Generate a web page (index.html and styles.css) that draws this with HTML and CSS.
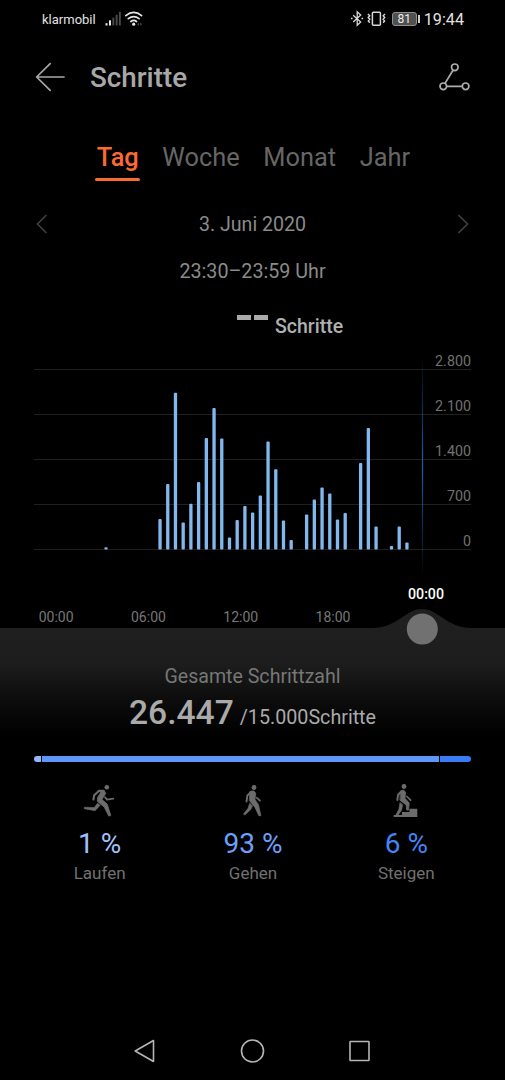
FILE: index.html
```html
<!DOCTYPE html>
<html lang="de">
<head>
  <meta charset="UTF-8" />
  <meta name="viewport" content="width=device-width, initial-scale=1.0"/>
  <title>Schritte</title>
  <link rel="stylesheet" href="styles.css">
</head>
<body>
  <div class="status-bar">
    <span class="carrier">klarmobil</span>
    <svg class="signal" width="40" height="18" viewBox="0 0 40 18">
      <g fill="#e6e6e6">
        <rect x="1.5" y="13.2" width="2" height="2.3"/>
        <rect x="5" y="10.3" width="2" height="5.2"/>
      </g>
      <g fill="#4a4a4a">
        <rect x="8.4" y="7.6" width="1.9" height="7.9"/>
        <rect x="11.7" y="4.8" width="1.9" height="10.7"/>
        <rect x="14.9" y="1.8" width="1.9" height="13.7"/>
        <path d="M35 12.5l-1.8 1.7 1.8 1.7zM36.2 12.5l1.8 1.7-1.8 1.7z"/>
      </g>
      <g fill="none" stroke="#e6e6e6" stroke-width="1.7" stroke-linecap="round">
        <path d="M21.8 5.6q7.9-6.4 15.8 0"/>
        <path d="M24.3 8.7q5.4-4.2 10.8 0"/>
        <path d="M26.9 11.5q2.8-2.2 5.6 0"/>
      </g>
      <circle cx="29.7" cy="14.2" r="1.6" fill="#e6e6e6"/>
    </svg>
    <div class="status-right">
      <svg width="36" height="18" viewBox="0 0 36 18" fill="none" stroke="#d8d8d8">
        <path d="M2.2 5.2l7.5 6.8-3.5 3.3V1.7l3.5 3.3-7.5 7" stroke-width="1.3"/>
        <path d="M0 8.5h1.6M10.5 8.5h1.6" stroke-width="1.7"/>
        <rect x="21.4" y="2.2" width="8" height="13" rx="1" stroke-width="1.5"/>
        <path d="M16.9 4l1.8 1.8-1.5 1.7 1.6 1.7-1.5 1.7 1.5 1.8M34 4l-1.8 1.8 1.5 1.7-1.6 1.7 1.5 1.7-1.5 1.8" stroke-width="1.4"/>
      </svg>
      <span class="battery">81</span>
      <span class="clock">19:44</span>
    </div>
  </div>

  <div class="header">
    <svg width="30" height="30" viewBox="0 0 30 30" fill="none" stroke="#a8a8a8" stroke-width="1.7" stroke-linecap="round" stroke-linejoin="round">
      <path d="M29 15H2M15.2 1.6L1.6 15l13.6 13.4"/>
    </svg>
    <h1>Schritte</h1>
    <svg class="share" width="34" height="30" viewBox="0 0 34 30" fill="none" stroke="#adadad" stroke-width="1.7">
      <circle cx="17.8" cy="5.3" r="3.3"/>
      <circle cx="6.3" cy="24.3" r="3.3"/>
      <circle cx="28.6" cy="24.3" r="3.3"/>
      <path d="M16 8.2L8 21.4M9.6 24.3h15.7"/>
    </svg>
  </div>

  <div class="tabs">
    <span class="tab active">Tag</span>
    <span class="tab">Woche</span>
    <span class="tab">Monat</span>
    <span class="tab">Jahr</span>
  </div>

  <div class="date-row">
    <svg width="12" height="20" viewBox="0 0 12 20"><path d="M10.5 1L1.5 10l9 9"/></svg>
    <span>3. Juni 2020</span>
    <svg width="12" height="20" viewBox="0 0 12 20"><path d="M1.5 1l9 9-9 9"/></svg>
  </div>
  <div class="time-range">23:30–23:59 Uhr</div>
  <div class="current">
    <span class="dash"></span><span class="dash"></span>
    <span class="unit">Schritte</span>
  </div>

  <div class="chart">
    <div class="line">2.800</div>
    <div class="line">2.100</div>
    <div class="line">1.400</div>
    <div class="line">700</div>
    <div class="line">0</div>
    <svg class="bars" id="bars" width="438" height="230" viewBox="0 0 438 230">
      <defs>
        <linearGradient id="cursor" x1="0" y1="0" x2="0" y2="1">
          <stop offset="0" stop-color="#1c5fae" stop-opacity="0"/>
          <stop offset=".5" stop-color="#1c5fae"/>
          <stop offset="1" stop-color="#1c5fae" stop-opacity="0"/>
        </linearGradient>
      </defs>
      <rect x="387.9" y="5" width="1.2" height="223" fill="url(#cursor)"/>
    </svg>
  </div>

  <div class="selected-time">00:00</div>
  <div class="hours">
    <span>00:00</span>
    <span>06:00</span>
    <span>12:00</span>
    <span>18:00</span>
  </div>

  <div class="summary">
    <svg class="slider" width="100" height="38" viewBox="0 0 100 38">
      <path d="M0 20C26 20 33 1 50 1s24 19 50 19z" fill="#1f1f1f"/>
      <circle cx="50.3" cy="21" r="15.5" fill="#717171"/>
    </svg>
    <div class="total-label">Gesamte Schrittzahl</div>
    <div class="total"><b>26.447</b><span>/15.000Schritte</span></div>
    <div class="split">
      <div class="run"></div>
      <div class="walk"></div>
      <div class="climb"></div>
    </div>
  </div>

  <div class="activities">
    <div class="activity">
      <svg width="34" height="36" viewBox="0 0 34 36" fill="none" stroke="#6c6c6c" stroke-linecap="round" stroke-linejoin="round">
        <circle cx="23.8" cy="4.3" r="2.3" fill="#6c6c6c" stroke="none"/>
        <path d="M20.5 7.7L16 7.7 11.2 12.3l-.8 4.2" stroke-width="2.1"/>
        <path d="M16 7.5l5.4.3 1.3 2.6-3.7 6.1 5.2 4.6 3.6 11.5-2.1.4-4.5-9-6.9-5.7.4-4.1 3-4.8z" fill="#6c6c6c" stroke-width=".8"/>
        <path d="M22.1 14.3l2 2.3 6.1-.9" stroke-width="1.8"/>
        <path d="M14.6 20.3l-3.3 4.2-10-.3v1.6l10.8 1.9 4.9-5.3z" fill="#6c6c6c" stroke-width=".6"/>
      </svg>
      <div class="percent light">1 %</div>
      <div class="name">Laufen</div>
    </div>
    <div class="activity">
      <svg width="34" height="36" viewBox="0 0 34 36" fill="none" stroke="#6c6c6c" stroke-linecap="round" stroke-linejoin="round">
        <circle cx="18" cy="4.5" r="2.4" fill="#6c6c6c" stroke="none"/>
        <path d="M15 8.8l-3.6 3.7-.9 6" stroke-width="1.9"/>
        <path d="M14.2 8.5l3.3-.7 2.2 2.2-.7 6.5 3.5 5.5 2.3 10.5-1.8.4-4.3-9-5.2-6.1z" fill="#6c6c6c" stroke-width=".8"/>
        <path d="M20.9 14.8l3 2.8" stroke-width="1.8"/>
        <path d="M13.6 20.5l-1.5 4.7-4.5 5.8 1.1 1.1 6-5.5 1.7-3.5z" fill="#6c6c6c" stroke-width=".7"/>
      </svg>
      <div class="percent medium">93 %</div>
      <div class="name">Gehen</div>
    </div>
    <div class="activity">
      <svg width="34" height="36" viewBox="0 0 34 36" fill="none" stroke="#6c6c6c" stroke-linecap="round" stroke-linejoin="round">
        <circle cx="15" cy="3.5" r="2.4" fill="#6c6c6c" stroke="none"/>
        <path d="M12.4 8.4L9 12l-.7 5" stroke-width="1.9"/>
        <path d="M11.7 8l2.7-1 2.2 2-.6 6.2 4.2 4.9-.7 7h-1.8l-.5-5.1-6-4.6z" fill="#6c6c6c" stroke-width=".8"/>
        <path d="M17.9 13.5l3.7 3.7" stroke-width="1.7"/>
        <path d="M10.9 19.8l-1 6.5-3.3 6.1h2.2l3.8-5.2 1-5.3z" fill="#6c6c6c" stroke-width=".6"/>
        <path d="M4.7 33.9v-1.9h8.2v-3h7.5v-3.2h7.9v8.1z" fill="#6c6c6c" stroke="none"/>
      </svg>
      <div class="percent dark">6 %</div>
      <div class="name">Steigen</div>
    </div>
  </div>

  <div class="nav-bar">
    <svg width="24" height="26" viewBox="0 0 24 26"><path d="M20.5 2.5v21L2.2 13z"/></svg>
    <svg width="26" height="26" viewBox="0 0 26 26"><circle cx="12.5" cy="13" r="11"/></svg>
    <svg width="24" height="26" viewBox="0 0 24 26"><rect x="2" y="3.5" width="19" height="19" rx=".5"/></svg>
  </div>

  <script>
    // steps per half hour, starting at 00:00
    const steps = [
      0, 0, 0, 0, 0, 0, 35, 0, 0, 0, 0, 0,
      0, 475, 1020, 2440, 420, 710, 1050, 1735, 2200, 1725, 187, 460,
      675, 575, 840, 1680, 1250, 450, 148, 0, 545, 778, 965, 870,
      466, 568, 0, 1345, 1890, 358, 0, 55, 358, 110, 0, 0
    ];
    const bars = document.getElementById('bars');
    const step = 7.715;
    const base = 199.5;

    steps.forEach((value, index) => {
      if (!value) return;
      const height = value / 2800 * 180;
      const bar = document.createElementNS('http://www.w3.org/2000/svg', 'rect');
      bar.setAttribute('x', 24.1 + index * step);
      bar.setAttribute('y', base - height);
      bar.setAttribute('width', 3.3);
      bar.setAttribute('height', height);
      bar.setAttribute('rx', Math.min(1, height / 2));
      bars.appendChild(bar);
    });
  </script>
</body>
</html>
```
FILE: styles.css
```css
* {
  box-sizing: border-box;
}
body {
  margin: 0;
  width: 505px;
  height: 1080px;
  background: #000;
  color: #8a8a8a;
  font-family: Roboto, sans-serif;
  display: flex;
  flex-direction: column;
  overflow: hidden;
}
svg {
  display: block;
  flex: none;
}
.status-bar {
  height: 38px;
  padding: 0 41px 0 42px;
  display: flex;
  align-items: center;
  color: #e2e2e2;
}
.carrier {
  font-size: 13px;
  width: 62px;
}
.status-right {
  margin-left: auto;
  display: flex;
  align-items: center;
}
.battery {
  position: relative;
  width: 25px;
  height: 14px;
  margin-left: 5px;
  border: 1px solid #909090;
  border-radius: 3px;
  background: #505050;
  color: #eee;
  font-size: 12px;
  line-height: 12px;
  text-align: center;
}
.battery::after {
  content: "";
  position: absolute;
  right: -4px;
  top: 2px;
  width: 2px;
  height: 8px;
  background: #ccc;
}
.clock {
  margin-left: 7px;
  font-size: 16.2px;
}
.header {
  height: 78px;
  padding: 0 34px 0 35px;
  display: flex;
  align-items: center;
}
h1 {
  margin: 0 0 0 25px;
  font-size: 27.8px;
  font-weight: 500;
  color: #a8a8a8;
}
.share {
  margin-left: auto;
}
.tabs {
  height: 66px;
  padding: 24px 0 0 2px;
  display: flex;
  justify-content: center;
  gap: 23.6px;
  font-size: 25.4px;
  line-height: 34px;
  color: #666;
}
.tab {
  height: 42px;
}
.tab.active {
  position: relative;
  color: #fc6a32;
  font-weight: 500;
}
.tab.active::after {
  content: "";
  position: absolute;
  left: -2px;
  right: -1px;
  bottom: 1px;
  height: 3px;
  border-radius: 2px;
  background: #fc6a32;
}
.date-row {
  height: 83px;
  padding: 0 36px;
  display: flex;
  align-items: center;
  justify-content: space-between;
  font-size: 19.6px;
}
.date-row span {
  padding-top: 1px;
}
.date-row path {
  fill: none;
  stroke: #404040;
  stroke-width: 1.6;
}
.time-range {
  height: 12px;
  line-height: 14px;
  font-size: 19.7px;
  text-align: center;
}
.current {
  height: 73px;
  padding: 38px 0 0 237px;
  display: flex;
  gap: 3px;
}
.dash {
  width: 14px;
  height: 5px;
  background: #aaa;
}
.unit {
  margin-left: 4px;
  line-height: 24px;
  font-size: 19.5px;
  font-weight: 500;
  color: #b0b0b0;
}
.chart {
  position: relative;
  margin: -25px 34px 0;
  height: 225px;
}
.line {
  height: 45px;
  padding-top: 28px;
  border-bottom: 1px solid #202020;
  font-size: 14.3px;
  line-height: 17px;
  text-align: right;
  color: #717171;
}
.bars {
  position: absolute;
  left: 0;
  top: 25px;
}
.bars > rect:not(:first-of-type) {
  fill: #81b9ef;
}
.selected-time {
  height: 58px;
  padding: 35px 0 0 408px;
  font-size: 14.2px;
  font-weight: 500;
  line-height: 18px;
  color: #fff;
}
.hours {
  height: 20px;
  padding-left: 10px;
  display: flex;
  font-size: 14px;
  line-height: 18px;
  color: #777;
}
.hours span {
  width: 92.3px;
  text-align: center;
}
.summary {
  position: relative;
  height: 142px;
  padding: 38px 34px 0;
  background: linear-gradient(#1f1f1f 0, #1d1d1d 35px, #0d0d0d 70px, #000 108px);
  text-align: center;
}
.slider {
  position: absolute;
  left: 372px;
  top: -20px;
}
.total-label {
  font-size: 19.6px;
  line-height: 22px;
  color: #777;
}
.total {
  height: 54px;
  padding-top: 5px;
  font-size: 19.7px;
  line-height: 40px;
  color: #aaa;
}
.total b {
  margin-right: 6px;
  font-size: 33.6px;
  font-weight: 500;
}
.split {
  margin-top: 14px;
  height: 6px;
  display: flex;
  gap: 1px;
  border-radius: 3px;
  overflow: hidden;
}
.run {
  width: 7px;
  background: #90b8fb;
}
.walk {
  flex: 1;
  background: #5f97f8;
}
.climb {
  width: 31px;
  background: #397cf6;
}
.activities {
  padding: 13px 22px 0 23px;
  height: 252px;
  display: flex;
}
.activity {
  flex: 1;
  display: flex;
  flex-direction: column;
  align-items: center;
}
.percent {
  margin-top: 8px;
  font-size: 28px;
  line-height: 34px;
}
.light {
  color: #a0c2fc;
}
.medium {
  color: #6da0fa;
}
.dark {
  color: #4485f8;
}
.name {
  margin-top: 2px;
  font-size: 17px;
  line-height: 20px;
  color: #717171;
}
.nav-bar {
  padding: 16px 133px 0;
  display: flex;
  justify-content: space-between;
}
.nav-bar svg * {
  fill: none;
  stroke: #b5b5b5;
  stroke-width: 1.6;
  stroke-linejoin: round;
}
```
